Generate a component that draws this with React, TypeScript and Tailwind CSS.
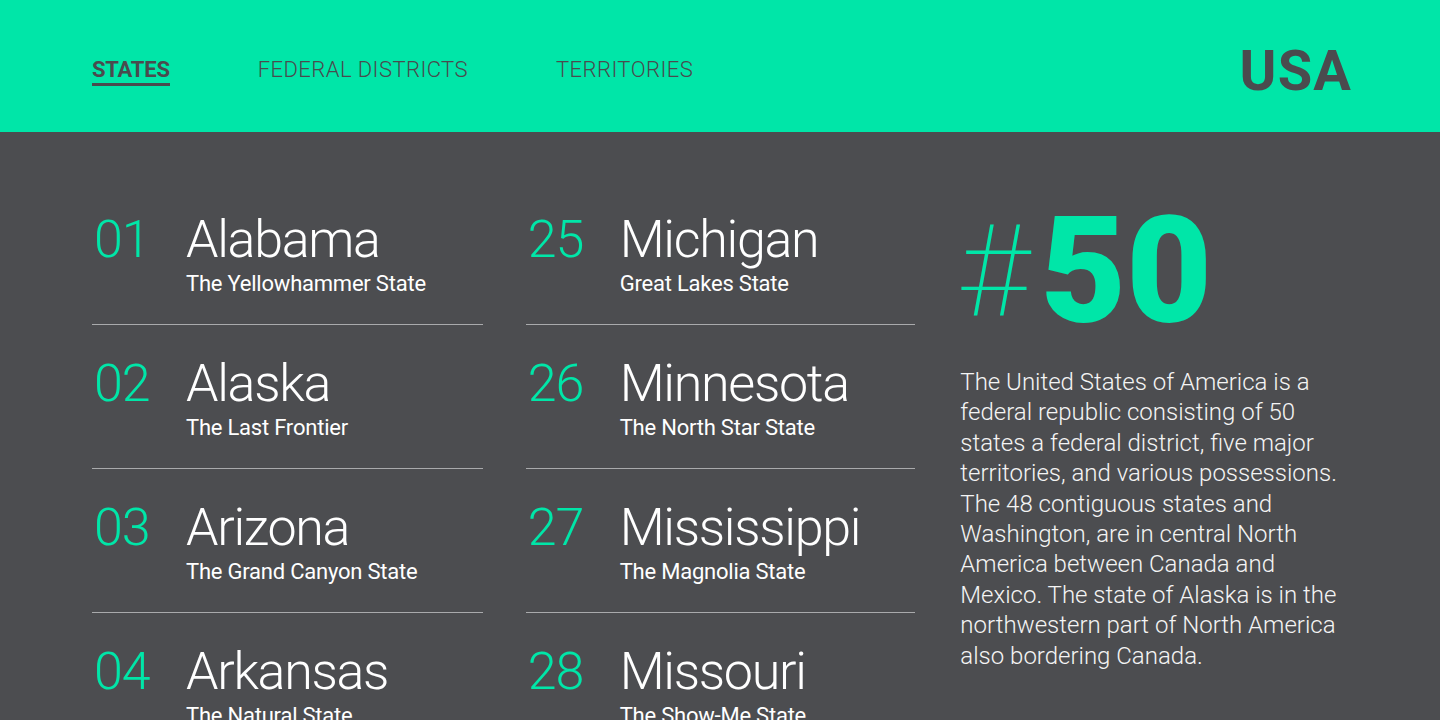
import React from 'react';

const left = [
  { n: '01', name: 'Alabama', nick: 'The Yellowhammer State' },
  { n: '02', name: 'Alaska', nick: 'The Last Frontier' },
  { n: '03', name: 'Arizona', nick: 'The Grand Canyon State' },
  { n: '04', name: 'Arkansas', nick: 'The Natural State' },
];

const right = [
  { n: '25', name: 'Michigan', nick: 'Great Lakes State' },
  { n: '26', name: 'Minnesota', nick: 'The North Star State' },
  { n: '27', name: 'Mississippi', nick: 'The Magnolia State' },
  { n: '28', name: 'Missouri', nick: 'The Show-Me State' },
];

function StateRow({ n, name, nick }: { n: string; name: string; nick: string }) {
  return (
    <div className="flex border-b border-[#a9aaac] pt-[14px] pb-[26px] mb-[17px]">
      <div className="w-[94px] pl-[2px] text-[#00e6a8] text-[52px] leading-[56px] font-light tracking-[-0.02em]">{n}</div>
      <div>
        <div className="text-white text-[52px] leading-[56px] font-light tracking-[-0.025em]">{name}</div>
        <div className="text-white text-[22px] leading-[28px] mt-[2px] tracking-[-0.01em]">{nick}</div>
      </div>
    </div>
  );
}

export default function App() {
  return (
    <div className="w-[1440px] h-[720px] overflow-hidden bg-[#4c4d50] font-['Roboto',sans-serif]">
      {/* Header */}
      <header className="h-[132px] bg-[#00e6a8] flex items-center justify-between pl-[92px] pr-[88px]">
        <nav className="flex items-center gap-[88px] text-[22px] tracking-[0.02em] text-[#4a4b4e] pt-[10px]">
          <a className="font-bold tracking-[-0.01em] border-b-[3px] border-[#4a4b4e] leading-[26px]">STATES</a>
          <a className="font-light border-b-[3px] border-transparent leading-[26px]">FEDERAL DISTRICTS</a>
          <a className="font-light border-b-[3px] border-transparent leading-[26px]">TERRITORIES</a>
        </nav>
        <div className="text-[56px] font-bold text-[#4a4b4e] tracking-[0.02em] leading-none pt-[10px]">USA</div>
      </header>

      {/* Body */}
      <main className="flex px-[92px] pt-[66px] gap-[43px]">
        <section className="w-[391px]">
          {left.map((s) => (
            <StateRow key={s.n} {...s} />
          ))}
        </section>
        <section className="w-[390px]">
          {right.map((s) => (
            <StateRow key={s.n} {...s} />
          ))}
        </section>
        <aside className="w-[390px]">
          <div className="flex items-center text-[#00e6a8] leading-none">
            <span className="text-[128px] font-thin mr-[12px]">#</span>
            <span className="text-[148px] font-black">50</span>
          </div>
          <p className="pl-[2px] text-[#f4f4f4] text-[24px] leading-[30.4px] font-light mt-[21px]">
            The United States of America is a federal republic consisting of 50 states a federal district, five major
            territories, and various possessions. The 48 contiguous states and Washington, are in central North
            America between Canada and Mexico. The state of Alaska is in the northwestern part of North America also
            bordering Canada.
          </p>
        </aside>
      </main>
    </div>
  );
}
